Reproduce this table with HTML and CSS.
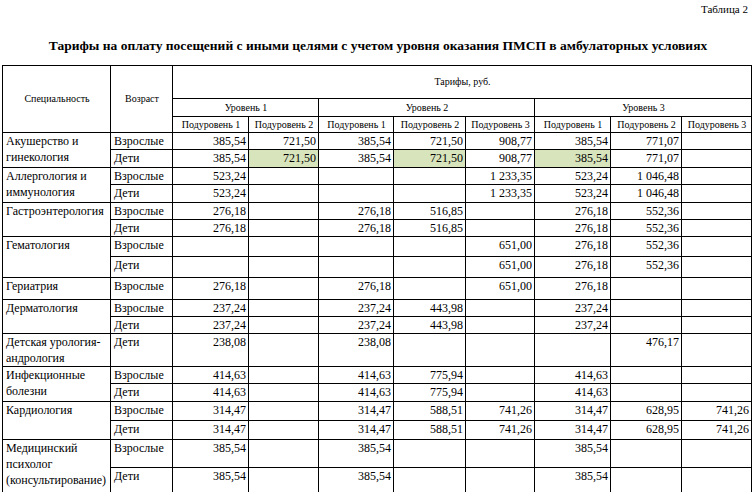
FILE: index.html
```html
<!DOCTYPE html>
<html lang="ru">
<head>
<meta charset="utf-8">
<title>Таблица 2</title>
<link rel="stylesheet" href="styles.css">
</head>
<body>
<div class="page">
  <div class="note">Таблица 2</div>
  <h1 class="title">Тарифы на оплату посещений с иными целями с учетом уровня оказания ПМСП в амбулаторных условиях</h1>
  <table class="tariffs">
    <colgroup>
      <col class="c-spec"><col class="c-age">
      <col class="c-76"><col class="c-70"><col class="c-75"><col class="c-72"><col class="c-69"><col class="c-76"><col class="c-71"><col class="c-70">
    </colgroup>
    <thead>
      <tr class="h1">
        <th rowspan="3">Специальность</th>
        <th rowspan="3">Возраст</th>
        <th colspan="8">Тарифы, руб.</th>
      </tr>
      <tr class="h2">
        <th colspan="2">Уровень 1</th>
        <th colspan="3">Уровень 2</th>
        <th colspan="3">Уровень 3</th>
      </tr>
      <tr class="h3">
        <th>Подуровень 1</th><th>Подуровень 2</th>
        <th>Подуровень 1</th><th>Подуровень 2</th><th>Подуровень 3</th>
        <th>Подуровень 1</th><th>Подуровень 2</th><th>Подуровень 3</th>
      </tr>
    </thead>
    <tbody>
      <tr class="r17">
        <td class="name" rowspan="2">Акушерство и гинекология</td><td class="age">Взрослые</td>
        <td>385,54</td><td>721,50</td><td>385,54</td><td>721,50</td><td>908,77</td><td>385,54</td><td>771,07</td><td></td>
      </tr>
      <tr class="r18">
        <td class="age">Дети</td>
        <td>385,54</td><td class="hl">721,50</td><td>385,54</td><td class="hl">721,50</td><td>908,77</td><td class="hl">385,54</td><td>771,07</td><td></td>
      </tr>
      <tr class="r17">
        <td class="name" rowspan="2">Аллергология и иммунология</td><td class="age">Взрослые</td>
        <td>523,24</td><td></td><td></td><td></td><td>1&nbsp;233,35</td><td>523,24</td><td>1&nbsp;046,48</td><td></td>
      </tr>
      <tr class="r18">
        <td class="age">Дети</td>
        <td>523,24</td><td></td><td></td><td></td><td>1&nbsp;233,35</td><td>523,24</td><td>1&nbsp;046,48</td><td></td>
      </tr>
      <tr class="r17">
        <td class="name" rowspan="2">Гастроэнтерология</td><td class="age">Взрослые</td>
        <td>276,18</td><td></td><td>276,18</td><td>516,85</td><td></td><td>276,18</td><td>552,36</td><td></td>
      </tr>
      <tr class="r17">
        <td class="age">Дети</td>
        <td>276,18</td><td></td><td>276,18</td><td>516,85</td><td></td><td>276,18</td><td>552,36</td><td></td>
      </tr>
      <tr class="r20">
        <td class="name" rowspan="2">Гематология</td><td class="age">Взрослые</td>
        <td></td><td></td><td></td><td></td><td>651,00</td><td>276,18</td><td>552,36</td><td></td>
      </tr>
      <tr class="r21">
        <td class="age">Дети</td>
        <td></td><td></td><td></td><td></td><td>651,00</td><td>276,18</td><td>552,36</td><td></td>
      </tr>
      <tr class="r22">
        <td class="name">Гериатрия</td><td class="age">Взрослые</td>
        <td>276,18</td><td></td><td>276,18</td><td></td><td>651,00</td><td>276,18</td><td></td><td></td>
      </tr>
      <tr class="r16">
        <td class="name" rowspan="2">Дерматология</td><td class="age">Взрослые</td>
        <td>237,24</td><td></td><td>237,24</td><td>443,98</td><td></td><td>237,24</td><td></td><td></td>
      </tr>
      <tr class="r17">
        <td class="age">Дети</td>
        <td>237,24</td><td></td><td>237,24</td><td>443,98</td><td></td><td>237,24</td><td></td><td></td>
      </tr>
      <tr class="r30">
        <td class="name">Детская урология-андрология</td><td class="age">Дети</td>
        <td>238,08</td><td></td><td>238,08</td><td></td><td></td><td></td><td>476,17</td><td></td>
      </tr>
      <tr class="r16">
        <td class="name" rowspan="2">Инфекционные болезни</td><td class="age">Взрослые</td>
        <td>414,63</td><td></td><td>414,63</td><td>775,94</td><td></td><td>414,63</td><td></td><td></td>
      </tr>
      <tr class="r18">
        <td class="age">Дети</td>
        <td>414,63</td><td></td><td>414,63</td><td>775,94</td><td></td><td>414,63</td><td></td><td></td>
      </tr>
      <tr class="r19">
        <td class="name" rowspan="2">Кардиология</td><td class="age">Взрослые</td>
        <td>314,47</td><td></td><td>314,47</td><td>588,51</td><td>741,26</td><td>314,47</td><td>628,95</td><td>741,26</td>
      </tr>
      <tr class="r19">
        <td class="age">Дети</td>
        <td>314,47</td><td></td><td>314,47</td><td>588,51</td><td>741,26</td><td>314,47</td><td>628,95</td><td>741,26</td>
      </tr>
      <tr class="r28">
        <td class="name" rowspan="2">Медицинский психолог <span class="nowrap">(консультирование)</span></td><td class="age">Взрослые</td>
        <td>385,54</td><td></td><td>385,54</td><td></td><td></td><td>385,54</td><td></td><td></td>
      </tr>
      <tr class="r26">
        <td class="age">Дети</td>
        <td>385,54</td><td></td><td>385,54</td><td></td><td></td><td>385,54</td><td></td><td></td>
      </tr>
      <tr class="r20">
        <td class="name"></td><td class="age"></td>
        <td></td><td></td><td></td><td></td><td></td><td></td><td></td><td></td>
      </tr>
    </tbody>
  </table>
</div>
</body>
</html>
```

FILE: styles.css
```css
html, body {
  margin: 0;
  padding: 0;
  background: #fff;
}

.page {
  width: 756px;
  height: 492px;
  overflow: hidden;
  font-family: "Liberation Serif", "Times New Roman", serif;
  color: #000;
}

.note {
  height: 18px;
  line-height: 18px;
  font-size: 11px;
  text-align: right;
  padding-right: 8px;
}

.title {
  margin: 19px 0 0;
  height: 18px;
  line-height: 18px;
  font-size: 13.5px;
  font-weight: bold;
  text-align: center;
}

.tariffs {
  margin: 10px 0 0 2px;
  border-collapse: collapse;
  table-layout: fixed;
  width: 749px;
}

.c-spec { width: 108px; }
.c-age { width: 62px; }
.c-76 { width: 76px; }
.c-70 { width: 70px; }
.c-75 { width: 75px; }
.c-72 { width: 72px; }
.c-69 { width: 69px; }
.c-71 { width: 71px; }

.tariffs th,
.tariffs td {
  border: 1px solid #000;
  padding: 0 2px 0 3px;
  overflow: hidden;
}

.tariffs th {
  font-weight: normal;
  font-size: 10px;
  line-height: 12px;
  text-align: center;
  vertical-align: middle;
  white-space: nowrap;
}

.h1 { height: 33px; }
.h2 { height: 18px; }
.h3 { height: 16px; }

.tariffs td {
  font-size: 12px;
  line-height: 16px;
  vertical-align: top;
  text-align: right;
  white-space: nowrap;
}

.tariffs td.name {
  text-align: left;
  white-space: normal;
  padding-right: 0;
}

.nowrap {
  white-space: nowrap;
}

.tariffs td.age {
  text-align: left;
}

.tariffs td.hl {
  background: #d8e4bc;
}

.r16 { height: 16px; }
.r17 { height: 17px; }
.r18 { height: 18px; }
.r19 { height: 19px; }
.r20 { height: 20px; }
.r21 { height: 21px; }
.r22 { height: 22px; }
.r26 { height: 26px; }
.r28 { height: 28px; }
.r30 { height: 30px; }
```
